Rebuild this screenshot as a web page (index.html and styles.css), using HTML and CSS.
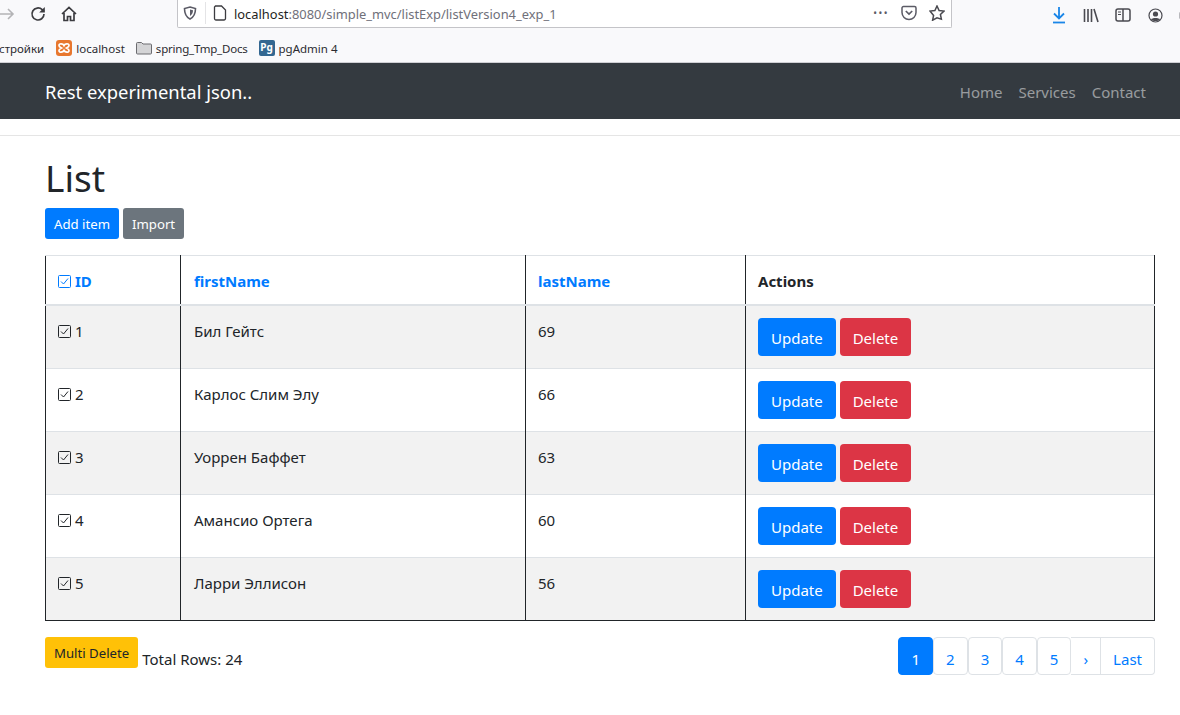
FILE: index.html
```html
<!DOCTYPE html>
<html lang="en">
<head>
  <meta charset="UTF-8" />
  <title>List</title>
  <link rel="stylesheet" href="styles.css">
</head>
<body>
  <div class="browser">
    <div class="toolbar">
      <div class="nav-btns">
        <svg class="ico back" width="16" height="16" viewBox="0 0 16 16"><path d="M-2 8H14M9 3l5 5-5 5" fill="none" stroke="#b4b4b6" stroke-width="1.6"/></svg>
        <svg class="ico reload" width="16" height="16" viewBox="0 0 16 16"><path d="M14 8a6 6 0 1 1-1.8-4.3L14 5.5" fill="none" stroke="#3c3c40" stroke-width="1.7"/><path d="M14.8 1v5.6H9.2z" fill="#3c3c40"/></svg>
        <svg class="ico home" width="16" height="16" viewBox="0 0 16 16"><path d="M1 8l7-6.5L15 8M3 7v7.5h3.5v-4h3v4H13V7" fill="none" stroke="#3c3c40" stroke-width="1.7"/></svg>
      </div>
      <div class="urlbar">
        <svg class="ico" width="14" height="14" viewBox="0 0 14 14"><path d="M7 1l5.500 1.500c0 5-1.500 8.500-5.500 10.500C3 11 1.500 7.500 1.500 2.500z" fill="none" stroke="#5b5b66" stroke-width="1.600"/><path d="M7 3.500l3 .8c0 2.500-.8 4.300-3 5.700z" fill="#5b5b66"/></svg>
        <span class="url-sep"></span>
        <svg class="ico" width="14" height="16" viewBox="0 0 14 16"><path d="M2.500 1h6L12.500 5v8.500a1.500 1.500 0 0 1-1.500 1.500H3a1.500 1.500 0 0 1-1.500-1.500V2z" fill="none" stroke="#3c3c40" stroke-width="1.300"/></svg>
        <span class="url-text">localhost<span class="url-dim">:8080/simple_mvc/listExp/listVersion4_exp_1</span></span>
        <span class="url-dots">•••</span>
        <svg class="ico" width="16" height="16" viewBox="0 0 16 16"><path d="M1 3a1.500 1.500 0 0 1 1.500-1.500h11A1.500 1.500 0 0 1 15 3v4.500a7 7 0 0 1-14 0z" fill="none" stroke="#5b5b66" stroke-width="1.500"/><path d="M4.800 6L8 9l3.200-3" fill="none" stroke="#5b5b66" stroke-width="1.700"/></svg>
        <svg class="ico url-star" width="16" height="16" viewBox="0 0 16 16"><path d="M8 1l2.100 4.500 4.900.6-3.600 3.300 1 4.800L8 12.800l-4.400 2.400 1-4.800L1 6.100l4.900-.6z" fill="none" stroke="#4a4a50" stroke-width="1.500"/></svg>
      </div>
      <div class="tool-btns">
        <svg class="ico" width="14" height="18" viewBox="0 0 14 18"><path d="M7 1v11M2 7.500l5 5 5-5" fill="none" stroke="#1a86e8" stroke-width="1.800"/><path d="M1 16.500h12" stroke="#1a86e8" stroke-width="1.800"/></svg>
        <svg class="ico" width="16" height="15" viewBox="0 0 16 15"><path d="M1.500 1v13M5 1v13M8.500 1v13M11 1l4 13" fill="none" stroke="#4a4a50" stroke-width="1.600"/></svg>
        <svg class="ico" width="16" height="14" viewBox="0 0 16 14"><rect x="1" y="1" width="14" height="12" rx="2" fill="none" stroke="#4a4a50" stroke-width="1.500"/><path d="M8 1v12" stroke="#4a4a50" stroke-width="1.500"/><path d="M3 4h3M3 6.500h3" stroke="#4a4a50"/></svg>
        <svg class="ico" width="15" height="15" viewBox="0 0 15 15"><circle cx="7.500" cy="7.500" r="6.500" fill="none" stroke="#4a4a50" stroke-width="1.200"/><circle cx="7.500" cy="6" r="2.600" fill="#4a4a50"/><path d="M3 11.500c1-2 8-2 9 0-2 2-7 2-9 0z" fill="#4a4a50"/></svg>
        <span class="tool-cut"></span>
      </div>
    </div>
    <div class="bookmarks">
      <span class="bm bm-cut">стройки</span>
      <span class="bm"><svg class="ico" width="16" height="16" viewBox="0 0 16 16"><rect width="16" height="16" rx="3" fill="#e8772e"/><path d="M8 5.500C7 3.500 3 3 3 5.500c0 1.500 1.500 2 2.500 2.500C4.500 8.500 3 9 3 10.500c0 2.500 4 2 5 0 1 2 5 2.500 5 0 0-1.500-1.500-2-2.500-2.500 1-.5 2.500-1 2.500-2.500 0-2.500-4-2-5 0z" fill="none" stroke="#fff" stroke-width="1.700"/></svg>localhost</span>
      <span class="bm"><svg class="ico" width="16" height="14" viewBox="0 0 16 14"><path d="M.5 2.500A1 1 0 0 1 1.500 1.500h4l1.500 1.500h7.500a1 1 0 0 1 1 1v8a1 1 0 0 1-1 1h-13a1 1 0 0 1-1-1z" fill="#d4d4d6" stroke="#6c6c70"/></svg><span class="bm-tight">spring_Tmp_Docs</span></span>
      <span class="bm"><span class="bm-pg">Pg</span>pgAdmin 4</span>
    </div>
  </div>

  <nav class="navbar">
    <a class="brand" href="#">Rest experimental json..</a>
    <div class="nav-links">
      <a href="#">Home</a>
      <a href="#">Services</a>
      <a href="#">Contact</a>
    </div>
  </nav>

  <div class="nav-gap"></div>

  <main class="content">
    <h1>List</h1>
    <div class="top-actions">
      <a class="btn btn-sm btn-primary" href="#">Add item</a>
      <a class="btn btn-sm btn-secondary" href="#">Import</a>
    </div>

    <table class="list-table">
      <thead>
        <tr>
          <th class="col-id"><a href="#"><svg class="check" width="13" height="13" viewBox="0 0 13 13"><rect x=".5" y=".5" width="12" height="12" rx="1" fill="none" stroke="currentColor"/><path d="M3 6.500l2.500 2.500 4.500-5.500" fill="none" stroke="currentColor"/></svg>ID</a></th>
          <th class="col-first"><a href="#">firstName</a></th>
          <th class="col-last"><a href="#">lastName</a></th>
          <th>Actions</th>
        </tr>
      </thead>
      <tbody>
        <tr>
          <td><svg class="check" width="13" height="13" viewBox="0 0 13 13"><rect x=".5" y=".5" width="12" height="12" rx="1" fill="none" stroke="currentColor"/><path d="M3 6.500l2.500 2.500 4.500-5.500" fill="none" stroke="currentColor"/></svg>1</td>
          <td>Бил Гейтс</td>
          <td>69</td>
          <td><a class="btn btn-primary" href="#">Update</a> <a class="btn btn-danger" href="#">Delete</a></td>
        </tr>
        <tr>
          <td><svg class="check" width="13" height="13" viewBox="0 0 13 13"><rect x=".5" y=".5" width="12" height="12" rx="1" fill="none" stroke="currentColor"/><path d="M3 6.500l2.500 2.500 4.500-5.500" fill="none" stroke="currentColor"/></svg>2</td>
          <td>Карлос Слим Элу</td>
          <td>66</td>
          <td><a class="btn btn-primary" href="#">Update</a> <a class="btn btn-danger" href="#">Delete</a></td>
        </tr>
        <tr>
          <td><svg class="check" width="13" height="13" viewBox="0 0 13 13"><rect x=".5" y=".5" width="12" height="12" rx="1" fill="none" stroke="currentColor"/><path d="M3 6.500l2.500 2.500 4.500-5.500" fill="none" stroke="currentColor"/></svg>3</td>
          <td>Уоррен Баффет</td>
          <td>63</td>
          <td><a class="btn btn-primary" href="#">Update</a> <a class="btn btn-danger" href="#">Delete</a></td>
        </tr>
        <tr>
          <td><svg class="check" width="13" height="13" viewBox="0 0 13 13"><rect x=".5" y=".5" width="12" height="12" rx="1" fill="none" stroke="currentColor"/><path d="M3 6.500l2.500 2.500 4.500-5.500" fill="none" stroke="currentColor"/></svg>4</td>
          <td>Амансио Ортега</td>
          <td>60</td>
          <td><a class="btn btn-primary" href="#">Update</a> <a class="btn btn-danger" href="#">Delete</a></td>
        </tr>
        <tr>
          <td><svg class="check" width="13" height="13" viewBox="0 0 13 13"><rect x=".5" y=".5" width="12" height="12" rx="1" fill="none" stroke="currentColor"/><path d="M3 6.500l2.500 2.500 4.500-5.500" fill="none" stroke="currentColor"/></svg>5</td>
          <td>Ларри Эллисон</td>
          <td>56</td>
          <td><a class="btn btn-primary" href="#">Update</a> <a class="btn btn-danger" href="#">Delete</a></td>
        </tr>
      </tbody>
    </table>

    <div class="table-footer">
      <div class="footer-left">
        <a class="btn btn-sm btn-warning" href="#">Multi Delete</a>
        <span class="total">Total Rows: 24</span>
      </div>
      <ul class="pagination">
        <li class="active"><a href="#">1</a></li>
        <li><a href="#">2</a></li>
        <li><a href="#">3</a></li>
        <li><a href="#">4</a></li>
        <li><a href="#">5</a></li>
        <li class="joined"><a href="#">›</a></li>
        <li class="joined last"><a href="#">Last</a></li>
      </ul>
    </div>
  </main>
</body>
</html>
```

FILE: styles.css
```css
* {
  box-sizing: border-box;
}
body {
  margin: 0;
  font-family: "Noto Sans", "Open Sans", Arial, sans-serif;
  font-size: 15px;
  color: #212529;
  background: #fff;
  overflow: hidden;
}
a {
  text-decoration: none;
}
.ico {
  display: block;
  flex: none;
}

/* browser chrome */
.browser {
  height: 63px;
  background: #f9f9fb;
  border-bottom: 1px solid #cfcfd4;
  overflow: hidden;
}
.toolbar {
  display: flex;
  height: 30px;
}
.nav-btns {
  width: 178px;
  display: flex;
  align-items: center;
  gap: 15px;
  padding: 0 0 2px 0;
  margin-left: -1px;
  flex: none;
}
.urlbar {
  width: 775px;
  height: 29px;
  margin-top: -1px;
  display: flex;
  align-items: center;
  background: #fff;
  border: 1px solid #c4c4c8;
  border-top: 0;
  border-radius: 0 0 2px 2px;
  padding: 0 6px 0 5px;
  gap: 7px;
  flex: none;
}
.url-sep {
  width: 1px;
  height: 22px;
  background: #e4e4e6;
  margin-left: 1px;
}
.url-text {
  flex: 1;
  font-size: 12.900px;
  color: #1f1f23;
  white-space: nowrap;
  padding-top: 2px;
}
.url-dim {
  color: #70707a;
}
.url-dots {
  font-size: 10px;
  color: #5b5b66;
  letter-spacing: 1.500px;
  margin-right: 5px;
}
.url-star {
  margin-left: 5px;
}
.tool-btns {
  display: flex;
  align-items: center;
  gap: 16.500px;
  padding: 0 0 0 100px;
  flex: none;
}
.tool-cut {
  width: 3px;
  height: 7px;
  background: #b8b8bc;
  border-radius: 2px;
  flex: none;
}
.bookmarks {
  display: flex;
  align-items: center;
  height: 32px;
  padding-top: 4px;
  gap: 11px;
  font-size: 11.500px;
  color: #2b2b30;
  white-space: nowrap;
}
.bm {
  display: flex;
  align-items: center;
  gap: 4px;
}
.bm-cut {
  margin-left: -1px;
  margin-right: 1px;
}
.bm-tight {
  letter-spacing: -.2px;
}
.bm-pg {
  width: 16px;
  height: 16px;
  border-radius: 2px;
  background: #336791;
  color: #fff;
  font-size: 10px;
  font-weight: 700;
  line-height: 15px;
  text-align: center;
}

/* navbar */
.navbar {
  height: 56px;
  background: #343a40;
  display: flex;
  align-items: center;
  justify-content: space-between;
  padding: 1px 34px 0 45px;
}
.brand {
  color: #fff;
  font-size: 18.400px;
}
.nav-links {
  display: flex;
  gap: 16px;
}
.nav-links a {
  color: rgba(255, 255, 255, .5);
  font-size: 15px;
}
.nav-gap {
  height: 17px;
  border-bottom: 1px solid #e5e5e5;
}

/* content */
.content {
  padding: 0 25px 0 45px;
}
h1 {
  font-size: 37px;
  font-weight: 400;
  line-height: 48px;
  margin: 18px 0 6px;
  color: #212529;
}
.top-actions {
  display: flex;
  gap: 4px;
  margin-bottom: 16px;
}
.btn {
  display: inline-block;
  color: #fff;
  font-size: 15px;
  line-height: 24px;
  padding: 7px 12px 5px;
  border: 1px solid transparent;
  border-radius: 4px;
  vertical-align: middle;
}
.btn-sm {
  font-size: 13.200px;
  line-height: 21px;
  padding: 5px 8px 3px;
  border-radius: 3px;
}
.btn-primary {
  background: #007bff;
}
.btn-secondary {
  background: #6c757d;
}
.btn-danger {
  background: #dc3545;
}
.btn-warning {
  background: #ffc107;
  color: #212529;
}

/* table */
.list-table {
  width: 1110px;
  table-layout: fixed;
  border-collapse: collapse;
}
.col-id {
  width: 135px;
}
.col-first {
  width: 345px;
}
.col-last {
  width: 220px;
}
.list-table th,
.list-table td {
  padding: 12px;
  border-left: 1px solid #212529;
  border-right: 1px solid #212529;
  text-align: left;
  vertical-align: top;
  font-size: 15px;
}
.list-table th:nth-child(2),
.list-table td:nth-child(2) {
  padding-left: 13px;
}
.list-table th {
  height: 49px;
  padding: 13px 12px 11px;
  vertical-align: middle;
  font-weight: 700;
  border-top: 1px solid #dee2e6;
  border-bottom: 2px solid #dee2e6;
}
.list-table td {
  height: 63px;
  border-top: 1px solid #dee2e6;
  line-height: 26px;
}
.list-table tbody tr:nth-child(odd) {
  background: #f2f2f2;
}
.list-table tbody tr:last-child td {
  border-bottom: 1px solid #212529;
}
.list-table th a {
  color: #007bff;
}
.check {
  vertical-align: -1px;
  margin-right: 4px;
}

/* footer */
.table-footer {
  display: flex;
  justify-content: space-between;
  margin-top: 16px;
}
.footer-left {
  display: flex;
  align-items: flex-start;
  gap: 4px;
}
.total {
  margin-top: 11px;
  line-height: 22px;
  font-size: 15px;
}
.pagination {
  display: flex;
  list-style: none;
  margin: 0;
  padding: 0;
}
.pagination a {
  display: block;
  height: 38px;
  padding: 0 12px;
  line-height: 42px;
  font-size: 15px;
  color: #007bff;
  background: #fff;
  border: 1px solid #dee2e6;
  border-radius: 4px;
}
.pagination .active a {
  background: #007bff;
  border-color: #007bff;
  color: #fff;
}
.pagination .joined a {
  border-left: 0;
  border-radius: 0;
}
.pagination .last a {
  border-radius: 0 4px 4px 0;
}
```
